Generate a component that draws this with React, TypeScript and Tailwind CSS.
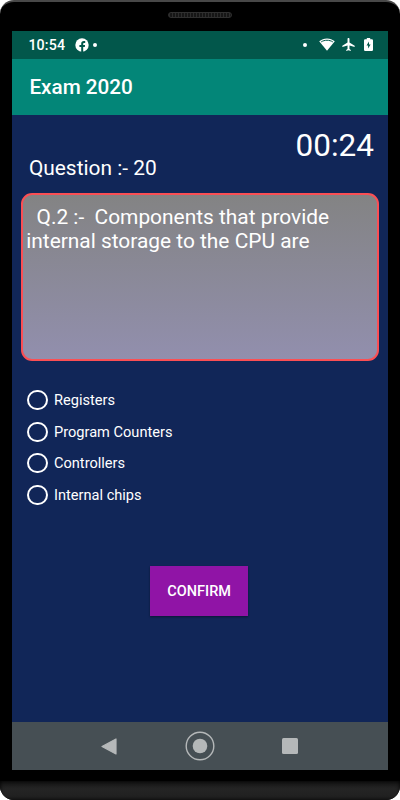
import { useState } from "react";

const options = ["Registers", "Program Counters", "Controllers", "Internal chips"];

function StatusBar() {
  return (
    <div className="flex h-[28px] shrink-0 items-center bg-[#02574b] pl-4 pr-[15px] text-white">
      <span className="text-[14.2px] leading-[28px] font-medium tracking-[0.15px]">10:54</span>
      <svg className="ml-[9.5px] size-[14px]" viewBox="0 0 14 14">
        <circle cx="7" cy="7" r="6.7" fill="#fff" />
        <path
          d="M6.2 14V9.1H4.4V7h1.8V5.7c0-1.8 1-2.7 2.6-2.7.6 0 1.1.1 1.4.1v1.8h-.9c-.8 0-1.1.4-1.1 1V7h1.9l-.3 2.1H8.2V14z"
          fill="#02574b"
        />
      </svg>
      <span className="ml-[4px] size-[4px] rounded-full bg-white" />
      <span className="ml-auto size-[4px] rounded-full bg-white" />
      <svg className="ml-[12px] h-[13px] w-[16px]" viewBox="0 0 16 13">
        <path d="M0.2 3.3C4.5-.6 11.5-.6 15.8 3.3L8 12.8z" fill="#fff" />
        <path d="M2.2 3.9C5.5 1.7 10.5 1.7 13.8 3.9" fill="none" stroke="#02574b" strokeWidth="1" />
      </svg>
      <svg className="ml-[7px] h-[13px] w-[13px]" viewBox="2 2 19 20">
        <path
          d="M21 16v-2l-8-5V3.5c0-.83-.67-1.5-1.5-1.5S10 2.67 10 3.5V9l-8 5v2l8-2.5V19l-2 1.5V22l3.5-1 3.5 1v-1.5L13 19v-5.5z"
          fill="#fff"
        />
      </svg>
      <svg className="ml-[8.5px] h-[13px] w-[9px]" viewBox="0 0 9 13">
        <path d="M2.8 0h3.4v1.2h1.6q1.2 0 1.2 1.2v9.4Q9 13 7.8 13H1.2Q0 13 0 11.8V2.4Q0 1.2 1.2 1.2h1.6z" fill="#fff" />
        <path d="M5 3.6 2.5 7.5h1.6v3L6.6 6.6H5z" fill="#02574b" />
      </svg>
    </div>
  );
}

function NavigationBar() {
  return (
    <div className="flex h-[48px] shrink-0 items-center justify-center bg-[#464f54] pr-px">
      <svg className="h-[17px] w-[16px]" viewBox="0 0 16 17">
        <path d="M15 1v15L1 8.5z" fill="#b5b8b9" stroke="#b5b8b9" strokeWidth="1.2" strokeLinejoin="round" />
      </svg>
      <svg className="ml-[68.5px] mr-[67px] size-[30px]" viewBox="0 0 30 30">
        <circle cx="15" cy="15" r="13.8" fill="none" stroke="#b5b8b9" strokeWidth="1.4" />
        <circle cx="15" cy="15" r="7.3" fill="#b5b8b9" />
      </svg>
      <span className="size-[16px] rounded-[1.5px] bg-[#b5b8b9]" />
    </div>
  );
}

export default function App() {
  const [selected, setSelected] = useState<string | null>(null);

  return (
    <div className="h-[800px] w-[400px] bg-white font-['Roboto',sans-serif]">
      <div className="flex h-full flex-col overflow-hidden rounded-[14px] border-t-[2px] border-[#484848] bg-black">
        {/* earpiece */}
        <div className="flex h-[28.5px] shrink-0 justify-center pt-[10px]">
          <div className="h-[6px] w-[64px] rounded-full border border-[#303030] bg-[repeating-linear-gradient(90deg,#2c2c2c_0_1px,#161616_1px_3px)]" />
        </div>

        <div className="mr-[12.5px] ml-[12.4px] flex h-[739.5px] shrink-0 flex-col bg-[#112658]">
          <StatusBar />
          <header className="flex h-[56px] shrink-0 items-center bg-[#038678] pl-[17px]">
            <h1 className="text-[20.7px] leading-6 font-medium text-white">Exam 2020</h1>
          </header>

          <main className="flex grow flex-col px-[8.5px] pt-[13px] text-white">
            <div className="pr-[5px] text-right text-[31.5px] leading-[36px]">00:24</div>
            <div className="-mt-[8px] pl-2 text-[20.9px] leading-6">Question :- 20</div>

            <div className="mt-[13.5px] h-[168px] rounded-[11px] border-2 border-[#fb4f54] bg-linear-to-b from-[#838383] to-[#928fae] bg-origin-border pt-[10px] pl-[3.3px]">
              <p className="text-[20.9px] leading-[24px] whitespace-pre">
                {"  Q.2 :-  Components that provide\ninternal storage to the CPU are"}
              </p>
            </div>

            <div className="mt-[23.2px] flex flex-col pl-[6.1px]">
              {options.map((option) => (
                <button
                  key={option}
                  className="flex h-[31.7px] cursor-pointer items-center text-left"
                  onClick={() => setSelected(option)}
                >
                  <span className="flex h-[20px] w-[21px] items-center justify-center rounded-full border-2 border-white">
                    {selected === option && <span className="size-[10px] rounded-full bg-white" />}
                  </span>
                  <span className="ml-[6px] text-[14.6px] leading-5">{option}</span>
                </button>
              ))}
            </div>

            <button className="mt-[55px] mr-[1.5px] h-[50px] w-[97.5px] cursor-pointer self-center bg-[#9014a6] pt-px text-[14.5px] font-medium shadow-[0_1px_2px_rgba(0,0,0,0.4)]">
              CONFIRM
            </button>
          </main>

          <NavigationBar />
        </div>

        <div className="mt-[11px] grow bg-linear-to-b from-[#141414] via-[#242424] via-40% to-[#202020] shadow-[inset_0_0_4px_#000]" />
      </div>
    </div>
  );
}
